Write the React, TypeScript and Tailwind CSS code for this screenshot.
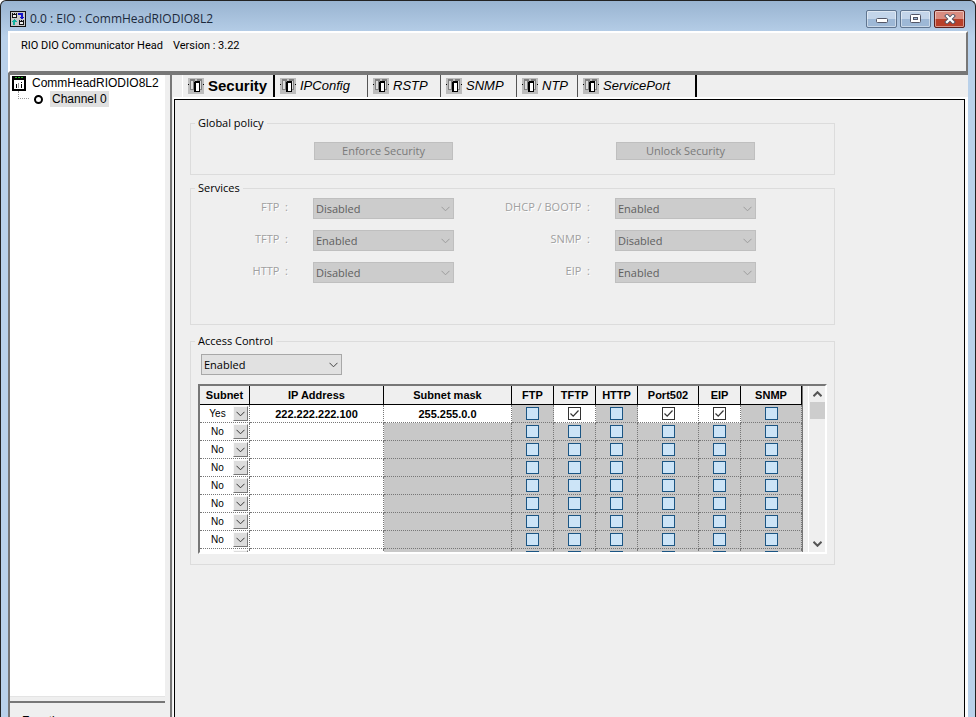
import { useState } from 'react';

import clsx from 'clsx';

const TABS = [
  { name: 'Security', width: 'w-[93px]' },
  { name: 'IPConfig', width: 'w-[93px]' },
  { name: 'RSTP', width: 'w-[73px]' },
  { name: 'SNMP', width: 'w-[76px]' },
  { name: 'NTP', width: 'w-[61px]' },
  { name: 'ServicePort', width: 'w-[119px]' },
];

const SERVICES = [
  { name: 'FTP', value: 'Disabled' },
  { name: 'DHCP / BOOTP', value: 'Enabled' },
  { name: 'TFTP', value: 'Enabled' },
  { name: 'SNMP', value: 'Disabled' },
  { name: 'HTTP', value: 'Disabled' },
  { name: 'EIP', value: 'Enabled' },
];

const PROTOCOLS = ['FTP', 'TFTP', 'HTTP', 'Port502', 'EIP', 'SNMP'];

const COLUMNS = [
  { title: 'Subnet', width: 'w-[50px]' },
  { title: 'IP Address', width: 'w-[134px]' },
  { title: 'Subnet mask', width: 'w-[128px]' },
  { title: 'FTP', width: 'w-[42px]' },
  { title: 'TFTP', width: 'w-[42px]' },
  { title: 'HTTP', width: 'w-[42px]' },
  { title: 'Port502', width: 'w-[61px]' },
  { title: 'EIP', width: 'w-[42px]' },
  { title: 'SNMP', width: 'w-[61px]' },
];

interface AccessRow {
  subnet: 'Yes' | 'No';
  ip: string;
  mask: string;
  allowed: string[];
}

const EMPTY_ROW: AccessRow = { subnet: 'No', ip: '', mask: '', allowed: [] };

const INITIAL_ROWS: AccessRow[] = [
  {
    subnet: 'Yes',
    ip: '222.222.222.100',
    mask: '255.255.0.0',
    allowed: ['TFTP', 'Port502', 'EIP'],
  },
  ...Array.from({ length: 8 }, () => EMPTY_ROW),
];

const GROUP =
  'w-full max-w-[645px] min-w-0 border border-[#dcdcdc] text-[11px] leading-4';
const SERVICE_GRID = 'grid grid-cols-[122px_141px_161px_141px]';
const CELL = 'border-b border-r border-dotted border-[#777] p-0';

function AppIcon() {
  return (
    <svg width="16" height="16" viewBox="0 0 16 16" shapeRendering="crispEdges">
      <rect width="16" height="16" fill="#111" />
      <rect x="1" y="1" width="14" height="14" fill="#c8c8c8" />
      <path d="M2 2h1v1h1v-1h1v1h1v-1h1v5h-5zM9 9h1v1h1v-1h1v1h1v-1h1v5h-5z" fill="#111" />
      <path d="M3 4h3v2h-3zM10 11h3v2h-3z" fill="#eee" />
      <path d="M8 2h5v4h1l-2 2l-3-2h2v-2h-3z" fill="#1414c8" />
      <path d="M4 8l3 3h-2v3h-2v-3h-2z" fill="#14b4a0" />
    </svg>
  );
}

function DeviceIcon() {
  return (
    <svg width="14" height="16" viewBox="0 0 14 16" shapeRendering="crispEdges">
      <path d="M0 1h14v15h-14z" fill="#000" />
      <path d="M2 5h10v9h-10z" fill="#fff" />
      <path d="M3 2h2v1h-2zM6 2h2v1h-2zM9 2h2v1h-2z" fill="#28b428" />
      <path d="M4 9h1v4h-1zM9 7h1v1h-1zM9 9h1v4h-1z" fill="#000" />
      <path d="M6 8h1v5h-1z" fill="#999" />
    </svg>
  );
}

function TabIcon() {
  return (
    <svg width="16" height="16" viewBox="0 0 16 16" shapeRendering="crispEdges">
      <rect width="16" height="16" fill="#bdbdbd" />
      <path d="M0 6h1v1h-1zM15 6h1v1h-1z" fill="#000" />
      <path d="M2 1h5v11h-5zM9 1h5v11h-5z" fill="#808080" />
      <path d="M3 3h2v8h-2zM12 3h1v8h-1z" fill="#dcdcdc" />
      <path d="M6 4l1-1h5v10l-1 1h-5z" fill="#000" />
      <path d="M8 5h3v8h-3z" fill="#fff" />
    </svg>
  );
}

function Chevron({ className }: { className?: string }) {
  return (
    <svg
      width="9"
      height="6"
      viewBox="0 0 9 6"
      fill="none"
      stroke="currentColor"
      className={clsx('pointer-events-none', className)}
    >
      <path d="M0.500 0.800L4.500 4.800L8.500 0.800" />
    </svg>
  );
}

function StateSelect({
  id,
  label,
  value,
  disabled,
}: {
  id: string;
  label?: string;
  value: string;
  disabled?: boolean;
}) {
  return (
    <div className="grid h-[21px] w-[141px] items-center">
      <select
        id={id}
        aria-label={label}
        defaultValue={value}
        disabled={disabled}
        className={clsx(
          'col-start-1 row-start-1 h-full w-full appearance-none border px-[2px] opacity-100',
          disabled
            ? 'border-[#bfbfbf] bg-[#ccc] text-[#606060]'
            : 'border-[#a8a8a8] bg-[#e1e1e1] text-black',
        )}
      >
        <option>Enabled</option>
        <option>Disabled</option>
      </select>
      <Chevron
        className={clsx(
          'col-start-1 row-start-1 mr-1 justify-self-end',
          disabled ? 'text-[#9c9c9c]' : 'text-[#444]',
        )}
      />
    </div>
  );
}

function AccessCheckbox({
  label,
  checked,
  disabled,
  onChange,
}: {
  label: string;
  checked: boolean;
  disabled: boolean;
  onChange: () => void;
}) {
  return (
    <div className="mx-auto grid size-[13px]">
      <input
        type="checkbox"
        aria-label={label}
        checked={checked}
        disabled={disabled}
        onChange={onChange}
        className={clsx(
          'col-start-1 row-start-1 size-[13px] appearance-none border',
          checked ? 'border-[#333] bg-white' : 'border-[#1b5583] bg-[#cce4f7]',
        )}
      />
      {checked ? (
        <svg
          viewBox="0 0 13 13"
          className="pointer-events-none col-start-1 row-start-1 size-[13px]"
        >
          <path d="M2.500 6.500L5.200 9.200L10.500 3.500" fill="none" stroke="#333" strokeWidth="1.200" />
        </svg>
      ) : null}
    </div>
  );
}

function TitleBar() {
  const button =
    'flex h-[18px] w-[31px] items-center justify-center rounded-[2px] border shadow-[inset_0_0_0_1px_rgba(255,255,255,0.45)]';
  return (
    <header className="flex h-[30px] shrink-0 items-center pt-[5px] pr-[3px] pl-[2px]">
      <AppIcon />
      <h1 className="ml-1 flex-1 font-['Open_Sans',sans-serif] text-[12px] leading-4 text-[#1c2a3c]">
        0.0 : EIO : CommHeadRIODIO8L2
      </h1>
      <div className="flex gap-[3px]">
        <button
          type="button"
          aria-label="Minimize"
          className={clsx(button, 'border-[#5f7590] bg-linear-to-b from-[#c3d5ea] from-50% to-[#9db8d6] to-50%')}
        >
          <svg width="12" height="5" viewBox="0 0 12 5" className="mt-1">
            <rect x="0.500" y="0.500" width="11" height="4" rx="1" fill="#fff" stroke="#535666" />
          </svg>
        </button>
        <button
          type="button"
          aria-label="Maximize"
          className={clsx(button, 'border-[#5f7590] bg-linear-to-b from-[#c3d5ea] from-50% to-[#9db8d6] to-50%')}
        >
          <svg width="11" height="9" viewBox="0 0 11 9">
            <rect x="0.500" y="0.500" width="10" height="8" rx="1" fill="#fff" stroke="#535666" />
            <rect x="3.500" y="3.500" width="4" height="2" fill="#9db8d6" stroke="#535666" />
          </svg>
        </button>
        <button
          type="button"
          aria-label="Close"
          className={clsx(button, 'border-[#5a1f1c] bg-linear-to-b from-[#d98c80] from-50% to-[#b8402a] to-50%')}
        >
          <svg width="12" height="10" viewBox="0 0 12 10" strokeLinecap="square">
            <path d="M3 2L9 8M9 2L3 8" stroke="#535666" strokeWidth="4" />
            <path d="M3 2L9 8M9 2L3 8" stroke="#fff" strokeWidth="2.200" />
          </svg>
        </button>
      </div>
    </header>
  );
}

function DeviceTree() {
  return (
    <aside className="flex w-[157px] shrink-0 flex-col border-l-2 border-[#777] font-['Liberation_Sans',sans-serif] text-[12px] leading-4">
      <ul className="min-h-0 flex-1 bg-white pl-[2px]">
        <li>
          <div className="flex h-4 items-center gap-[6px]">
            <DeviceIcon />
            <span className="whitespace-nowrap">CommHeadRIODIO8L2</span>
          </div>
          <ul>
            <li className="flex h-4 items-center pl-[6px]">
              <span className="mb-2 h-2 w-[11px] border-b border-l border-dotted border-[#999]" />
              <span className="ml-[5px] size-[9px] rounded-full border-2 border-black" />
              <span className="ml-[7px] bg-[#e0e0e0] px-[2px]">Channel 0</span>
            </li>
          </ul>
        </li>
      </ul>
      <div className="h-[5px] border-t border-[#e4e4e4]" />
      <section className="h-4 overflow-hidden border-t-2 border-[#777] pt-[10px] pl-3">
        <h2>Function</h2>
      </section>
    </aside>
  );
}

function AccessTable() {
  const [rows, setRows] = useState(INITIAL_ROWS);

  const update = (index: number, patch: Partial<AccessRow>) => {
    setRows(rows.map((row, i) => (i === index ? { ...row, ...patch } : row)));
  };

  const toggle = (index: number, protocol: string) => {
    const { allowed } = rows[index];
    update(index, {
      allowed: allowed.includes(protocol)
        ? allowed.filter(name => name !== protocol)
        : [...allowed, protocol],
    });
  };

  return (
    <div className="mt-[9px] ml-[7px] flex h-[170px] w-[629px] border-2 border-[#777] border-r-white border-b-white">
      <div className="flex-1 overflow-hidden">
        <table className="w-[603px] table-fixed border-separate border-spacing-0 border-r border-[#777] font-['Liberation_Sans',sans-serif]">
          <thead>
            <tr>
              {COLUMNS.map(column => (
                <th
                  key={column.title}
                  className={clsx(
                    column.width,
                    'h-[19px] border-r border-b border-black bg-[#efefef] p-0 text-[11px] leading-4 font-bold',
                  )}
                >
                  {column.title}
                </th>
              ))}
            </tr>
          </thead>
          <tbody>
            {rows.map((row, index) => (
              <tr key={index} className="h-[18px]">
                <td className={clsx(CELL, 'bg-white')}>
                  <div className="grid h-[17px] items-center">
                    <select
                      aria-label={`Subnet, row ${index + 1}`}
                      value={row.subnet}
                      onChange={event =>
                        update(index, {
                          subnet: event.target.value as AccessRow['subnet'],
                        })
                      }
                      className="col-start-1 row-start-1 w-full appearance-none pr-[14px] text-center text-[10px] leading-4"
                    >
                      <option>Yes</option>
                      <option>No</option>
                    </select>
                    <span className="pointer-events-none col-start-1 row-start-1 mr-px flex size-[15px] items-center justify-center justify-self-end border border-[#f8f8f8] border-r-[#777] border-b-[#777] bg-[#dcdcdc] text-[#333]">
                      <Chevron />
                    </span>
                  </div>
                </td>
                <td className={clsx(CELL, 'bg-white')}>
                  <input
                    aria-label={`IP address, row ${index + 1}`}
                    value={row.ip}
                    onChange={event => update(index, { ip: event.target.value })}
                    className="block h-[17px] w-full text-center text-[11px] leading-4 font-bold"
                  />
                </td>
                <td className={clsx(CELL, row.mask ? 'bg-white' : 'bg-[#c8c8c8]')}>
                  <input
                    aria-label={`Subnet mask, row ${index + 1}`}
                    value={row.mask}
                    disabled={row.subnet === 'No'}
                    onChange={event => update(index, { mask: event.target.value })}
                    className="block h-[17px] w-full text-center text-[11px] leading-4 font-bold"
                  />
                </td>
                {PROTOCOLS.map(protocol => (
                  <td
                    key={protocol}
                    className={clsx(
                      CELL,
                      row.allowed.includes(protocol) ? 'bg-white' : 'bg-[#c8c8c8]',
                    )}
                  >
                    <AccessCheckbox
                      label={`${protocol}, row ${index + 1}`}
                      checked={row.allowed.includes(protocol)}
                      disabled={!row.ip}
                      onChange={() => toggle(index, protocol)}
                    />
                  </td>
                ))}
              </tr>
            ))}
          </tbody>
        </table>
      </div>
      <div className="flex w-[17px] flex-col items-center border-l border-white text-[#555]">
        <button type="button" aria-label="Scroll up" className="flex h-4 w-full items-center justify-center">
          <Chevron className="rotate-180 stroke-2" />
        </button>
        <div className="h-[17px] w-[15px] bg-[#cdcdcd]" />
        <button
          type="button"
          aria-label="Scroll down"
          className="mt-auto flex h-4 w-full items-center justify-center"
        >
          <Chevron className="stroke-2" />
        </button>
      </div>
    </div>
  );
}

function SecurityPage() {
  const button =
    'h-[18px] w-[139px] justify-self-center border border-[#bfbfbf] bg-[#ccc] leading-4 text-[#7a7a7a]';
  return (
    <div className="flex flex-col pt-[15px] pl-[15px] font-['Open_Sans',sans-serif]">
      <fieldset className={clsx(GROUP, 'h-[60px]')}>
        <legend className="ml-1 px-[3px]">Global policy</legend>
        <div className={clsx(SERVICE_GRID, 'pt-[11px]')}>
          <button type="button" disabled className={clsx(button, 'col-start-2')}>
            Enforce Security
          </button>
          <button type="button" disabled className={clsx(button, 'col-start-4')}>
            Unlock Security
          </button>
        </div>
      </fieldset>
      <fieldset className={clsx(GROUP, 'mt-[5px] h-[145px]')}>
        <legend className="ml-1 px-[3px]">Services</legend>
        <div className={clsx(SERVICE_GRID, 'gap-y-[11px] pt-[2px]')}>
          {SERVICES.map(service => (
            <div key={service.name} className="contents">
              <label
                htmlFor={`service-${service.name}`}
                className="pt-px pr-[25px] text-right whitespace-pre text-[#a0a0a0] [text-shadow:1px_1px_0_#fff]"
              >
                {service.name}
                {'  :'}
              </label>
              <StateSelect
                id={`service-${service.name}`}
                value={service.value}
                disabled
              />
            </div>
          ))}
        </div>
      </fieldset>
      <fieldset className={clsx(GROUP, 'mt-2 h-[232px]')}>
        <legend className="ml-1 px-[3px]">Access Control</legend>
        <div className="pt-[5px] pl-[10px]">
          <StateSelect id="access-control" label="Access Control" value="Enabled" />
        </div>
        <AccessTable />
      </fieldset>
    </div>
  );
}

export default function App() {
  const [active, setActive] = useState('Security');

  return (
    <div className="flex h-screen flex-col overflow-hidden rounded-t-md border-x border-t border-[#222] bg-[#b9d1ea] bg-linear-to-b from-[#99b4d1] to-[#b9d1ea] to-[36px] px-[7px] font-['Roboto','Liberation_Sans',sans-serif] text-black">
      <TitleBar />
      <div className="h-[42px] shrink-0 border-2 border-t-white border-r-[#777] border-b-[#777] border-l-white bg-[#efefef] pt-[5px] pl-[11px] text-[11px] leading-4">
        <span>RIO DIO Communicator Head</span>
        <span className="ml-[10px]">Version : 3.22</span>
      </div>
      <div className="flex min-h-0 flex-1 border-t-2 border-[#777] bg-[#efefef]">
        <DeviceTree />
        <main className="ml-[5px] flex min-w-0 flex-1 flex-col border-l-2 border-[#777]">
          <div role="tablist" className="flex h-[22px] shrink-0 pl-[10px]">
            {TABS.map(({ name, width }) => (
              <button
                key={name}
                type="button"
                role="tab"
                aria-selected={active === name}
                onClick={() => setActive(name)}
                className={clsx(
                  width,
                  "flex items-center gap-1 border-r pl-[5px] font-['Liberation_Sans',sans-serif] whitespace-nowrap",
                  active === name
                    ? 'border-r-2 border-l border-l-white border-r-black text-[15px] font-bold'
                    : 'border-[#555] text-[13px] italic last:border-r-2 last:border-black',
                )}
              >
                <TabIcon />
                {name}
              </button>
            ))}
          </div>
          <div
            role="tabpanel"
            className="ml-[1px] min-h-0 flex-1 border-t-2 border-r-3 border-l border-white"
          >
            <div className="h-full border-t border-r border-l border-black bg-[#efefef]">
              <SecurityPage />
            </div>
          </div>
        </main>
      </div>
    </div>
  );
}
